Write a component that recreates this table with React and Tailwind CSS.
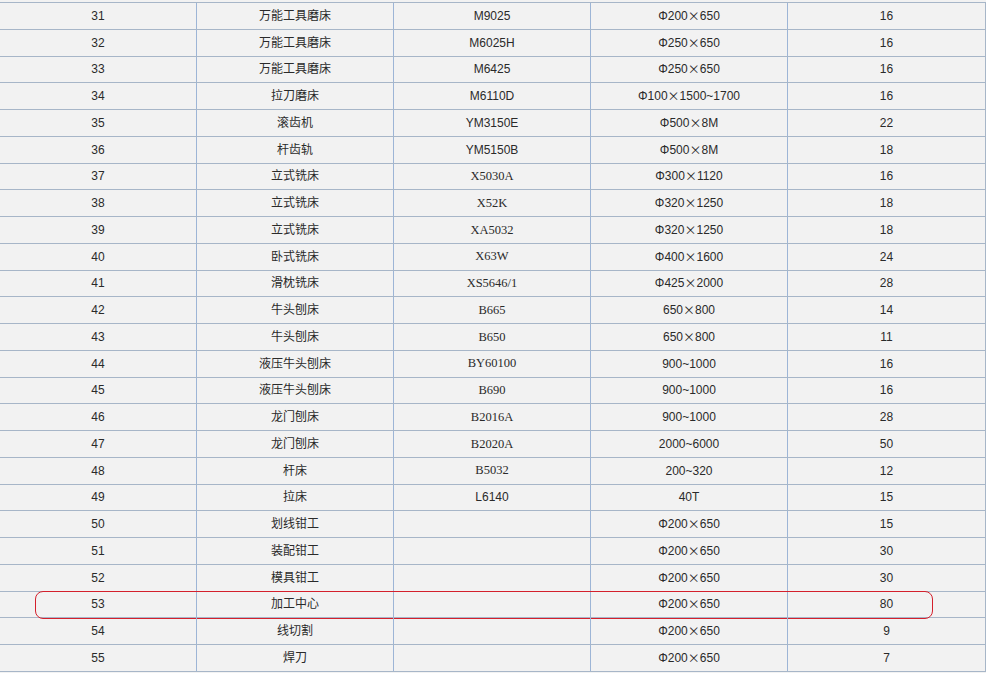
import React from 'react';

const rows = [
  ['31', '万能工具磨床', 'M9025', 'Φ200×650', '16'],
  ['32', '万能工具磨床', 'M6025H', 'Φ250×650', '16'],
  ['33', '万能工具磨床', 'M6425', 'Φ250×650', '16'],
  ['34', '拉刀磨床', 'M6110D', 'Φ100×1500~1700', '16'],
  ['35', '滚齿机', 'YM3150E', 'Φ500×8M', '22'],
  ['36', '杆齿轨', 'YM5150B', 'Φ500×8M', '18'],
  ['37', '立式铣床', 'X5030A', 'Φ300×1120', '16', true],
  ['38', '立式铣床', 'X52K', 'Φ320×1250', '18', true],
  ['39', '立式铣床', 'XA5032', 'Φ320×1250', '18', true],
  ['40', '卧式铣床', 'X63W', 'Φ400×1600', '24', true],
  ['41', '滑枕铣床', 'XS5646/1', 'Φ425×2000', '28', true],
  ['42', '牛头刨床', 'B665', '650×800', '14', true],
  ['43', '牛头刨床', 'B650', '650×800', '11', true],
  ['44', '液压牛头刨床', 'BY60100', '900~1000', '16', true],
  ['45', '液压牛头刨床', 'B690', '900~1000', '16', true],
  ['46', '龙门刨床', 'B2016A', '900~1000', '28', true],
  ['47', '龙门刨床', 'B2020A', '2000~6000', '50', true],
  ['48', '杆床', 'B5032', '200~320', '12', true],
  ['49', '拉床', 'L6140', '40T', '15'],
  ['50', '划线钳工', '', 'Φ200×650', '15'],
  ['51', '装配钳工', '', 'Φ200×650', '30'],
  ['52', '模具钳工', '', 'Φ200×650', '30'],
  ['53', '加工中心', '', 'Φ200×650', '80'],
  ['54', '线切割', '', 'Φ200×650', '9'],
  ['55', '焊刀', '', 'Φ200×650', '7'],
];

const sans = "font-['Liberation_Sans','Noto_Sans_CJK_SC',sans-serif]";

// the × in the original is the wide CJK glyph
function Size({ text }) {
  const parts = text.split('×');
  if (parts.length === 1) return text;
  return (
    <>
      {parts[0]}
      <span className="font-['Noto_Sans_CJK_SC',sans-serif]">×</span>
      {parts[1]}
    </>
  );
}

function Cell({ children, serif, last }) {
  return (
    <div
      className={`flex items-center justify-center w-[197px] ${last ? '' : 'border-r border-[#9db5d6]'} ${serif ? "font-['Liberation_Serif','Noto_Sans_CJK_SC',serif] text-[12.5px]" : ''}`}
    >
      {children}
    </div>
  );
}

export default function App() {
  return (
    <div className={`w-[986px] h-[673px] bg-[#f2f2f2] overflow-hidden pt-[2px] ${sans} text-[12px] text-[#2a2a2a]`}>
      <div className="w-[986px] border-t border-r border-[#a7b6c8]">
        {rows.map((r) => (
          <div key={r[0]} className="relative flex h-[26.76px] border-b border-[#a7b6c8]">
            <Cell>{r[0]}</Cell>
            <Cell>{r[1]}</Cell>
            <Cell serif={r[5]}>{r[2]}</Cell>
            <Cell><Size text={r[3]} /></Cell>
            <Cell last>{r[4]}</Cell>
            {r[0] === '53' && (
              <div className="absolute left-[35px] top-[-1px] w-[898px] h-[28px] rounded-[8px] border border-[#d4202c] pointer-events-none" />
            )}
          </div>
        ))}
      </div>
    </div>
  );
}
